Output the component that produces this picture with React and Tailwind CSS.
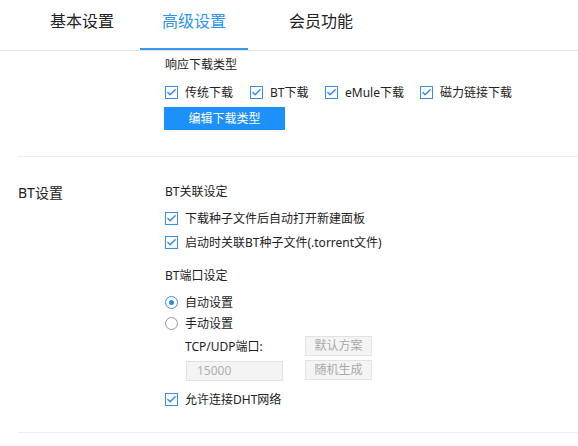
import { Check } from "lucide-react";

const font = { fontFamily: '"Noto Sans", "Noto Sans CJK SC", sans-serif' };

const Box = ({ label }) => (
  <label className="flex items-center gap-[7px] text-[12px] leading-[17px] text-[#222]">
    <span className="flex h-[13px] w-[13px] items-center justify-center border border-[#3b8ee6] bg-white">
      <Check size={11} strokeWidth={3} className="text-[#2f8ae6]" />
    </span>
    {label}
  </label>
);

const Radio = ({ label, on }) => (
  <label className="flex items-center gap-[7px] text-[12px] leading-[17px] text-[#222]">
    <span
      className={`flex h-[13px] w-[13px] items-center justify-center rounded-full border ${
        on ? "border-[#3b8ee6]" : "border-[#999]"
      } bg-white`}
    >
      {on && <span className="h-[5px] w-[5px] rounded-full bg-[#2f8ae6]" />}
    </span>
    {label}
  </label>
);

const GreyButton = ({ children }) => (
  <div className="flex h-[20px] w-[67px] items-center justify-center border border-[#e2e2e2] bg-[#f4f4f4] text-[12px] text-[#aaa]">
    {children}
  </div>
);

export default function App() {
  return (
    <div className="h-[446px] w-[578px] overflow-hidden bg-white" style={font}>
      {/* Tabs */}
      <div className="flex h-[51px] border-b border-[#e4e4e4]">
        <div className="ml-[50px] flex w-[90px] items-start pt-[9px] text-[16px] text-[#222]">基本设置</div>
        <div className="flex w-[108px] flex-col items-center">
          <div className="pt-[9px] text-[16px] text-[#2d95ee]">高级设置</div>
          <div className="mt-auto h-[2px] w-full bg-[#3a96ee]" />
        </div>
        <div className="ml-[41px] pt-[9px] text-[16px] text-[#222]">会员功能</div>
      </div>

      {/* download types */}
      <div className="ml-[18px] border-b border-[#eeeeee] pb-[26px]">
        <div className="ml-[147px] pt-[5px]">
          <div className="text-[12px] text-[#222]">响应下载类型</div>
          <div className="mt-[10px] flex">
            <div className="w-[85px]"><Box label="传统下载" /></div>
            <div className="w-[75px]"><Box label="BT下载" /></div>
            <div className="w-[95px]"><Box label="eMule下载" /></div>
            <Box label="磁力链接下载" />
          </div>
          <div className="-ml-[1px] mt-[6px] flex h-[23px] w-[121px] items-center justify-center bg-[#1e90fa] text-[12px] text-white">
            编辑下载类型
          </div>
        </div>
      </div>

      {/* BT settings */}
      <div className="ml-[18px] flex border-b border-[#eeeeee] pb-[24px]">
        <div className="w-[147px] pt-[25px] text-[14px] text-[#222]">BT设置</div>
        <div className="pt-[26px]">
          <div className="text-[12px] text-[#222]">BT关联设定</div>
          <div className="mt-[9px] flex flex-col gap-[7px]">
            <Box label="下载种子文件后自动打开新建面板" />
            <Box label="启动时关联BT种子文件(.torrent文件)" />
          </div>
          <div className="mt-[16px] text-[12px] text-[#222]">BT端口设定</div>
          <div className="mt-[9px] flex flex-col gap-[4px]">
            <Radio label="自动设置" on />
            <Radio label="手动设置" />
          </div>
          <div className="ml-[20px] mt-[4px] flex gap-[22px]">
            <div>
              <div className="pt-[2px] text-[12px] text-[#222]">TCP/UDP端口:</div>
              <div className="ml-[1px] mt-[5px] flex h-[20px] w-[97px] items-center border border-[#e2e2e2] bg-[#f4f4f4] pl-[10px] text-[12px] text-[#b0b0b0]">
                15000
              </div>
            </div>
            <div className="flex flex-col gap-[4px]">
              <GreyButton>默认方案</GreyButton>
              <GreyButton>随机生成</GreyButton>
            </div>
          </div>
          <div className="mt-[10px]">
            <Box label="允许连接DHT网络" />
          </div>
        </div>
      </div>
    </div>
  );
}
